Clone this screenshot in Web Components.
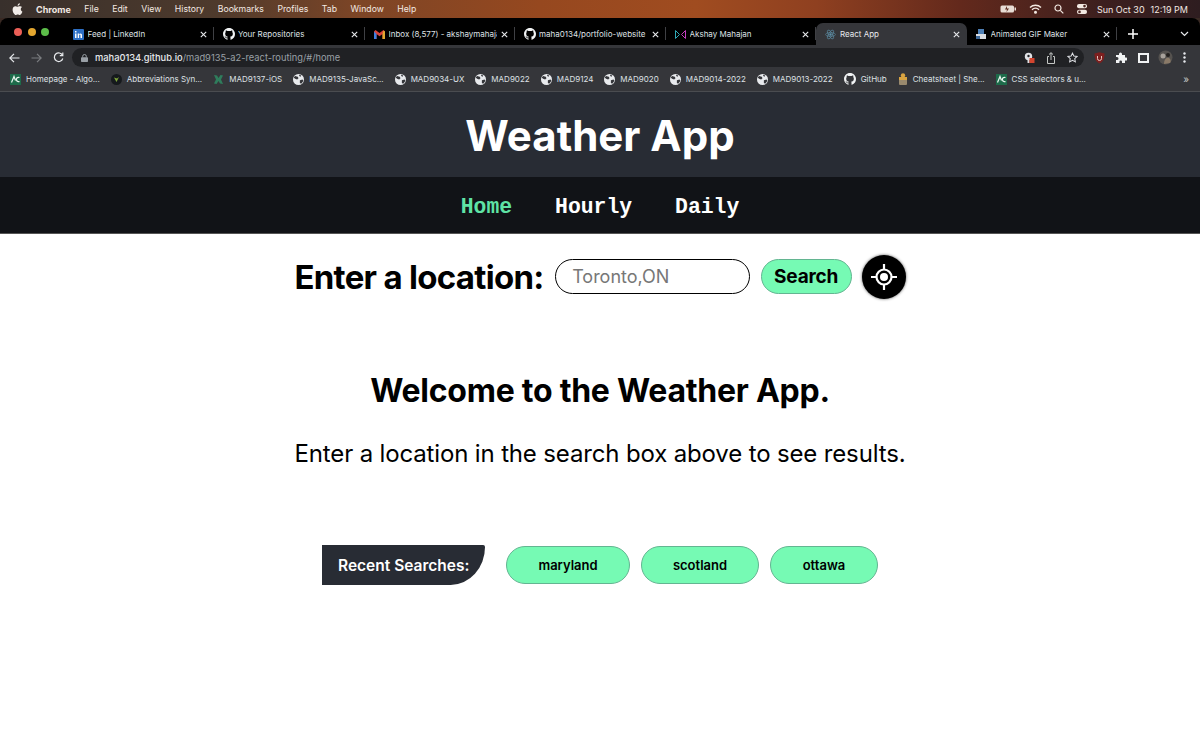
<!DOCTYPE html>
<html>
<head>
<meta charset="utf-8">
<title>React App</title>
<style>
  html,body{margin:0;padding:0;background:#fff;}
  body{width:1200px;height:750px;overflow:hidden;font-family:"Inter","Liberation Sans",sans-serif;}
</style>
</head>
<body>
<mac-menubar></mac-menubar>
<browser-chrome></browser-chrome>
<weather-app></weather-app>

<script>
const globe = '<svg width="11" height="11" viewBox="0 0 16 16"><circle cx="8" cy="8" r="8" fill="#e8eaed"/><path d="M3 3l4 1 1 2-2 2-3-1-2-2zM10 9l4-1 1 2-3 4-2-1z M9 1l3 1-1 2-2-1z" fill="#35363a"/></svg>';
const gh = '<svg width="12" height="12" viewBox="0 0 16 16"><path fill="#f1f3f4" d="M8 0C3.58 0 0 3.58 0 8c0 3.54 2.29 6.53 5.47 7.59.4.07.55-.17.55-.38 0-.19-.01-.82-.01-1.49-2.01.37-2.53-.49-2.69-.94-.09-.23-.48-.94-.82-1.13-.28-.15-.68-.52-.01-.53.63-.01 1.08.58 1.23.82.72 1.21 1.87.87 2.33.66.07-.52.28-.87.51-1.07-1.78-.2-3.64-.89-3.64-3.95 0-.87.31-1.59.82-2.15-.08-.2-.36-1.02.08-2.12 0 0 .67-.21 2.2.82.64-.18 1.32-.27 2-.27s1.36.09 2 .27c1.53-1.04 2.2-.82 2.2-.82.44 1.1.16 1.92.08 2.12.51.56.82 1.27.82 2.15 0 3.07-1.87 3.75-3.65 3.95.29.25.54.73.54 1.48 0 1.07-.01 1.93-.01 2.2 0 .21.15.46.55.38A8.01 8.01 0 0016 8c0-4.42-3.58-8-8-8z"/></svg>';
const ac = '<svg width="11" height="11" viewBox="0 0 11 11"><rect width="11" height="11" fill="#1d6b4a"/><path d="M1.500 8.500L4 2.500l1.500 4M9.500 3.500C7 3 6 4.500 6.500 6s2 2 3 1.500" fill="none" stroke="#e8f5ee" stroke-width="1.200"/></svg>';
const mad137 = '<svg width="11" height="11" viewBox="0 0 11 11"><path d="M1 1l3 .5 1.500 2.500L7.500 1 10 1.500 8 5.500 10 10l-3-.5L5.500 7 3.500 10 1 9.500 3 5.500z" fill="#2f7d5c"/></svg>';
const abbr = '<svg width="11" height="11" viewBox="0 0 11 11"><circle cx="5.500" cy="5.500" r="5.500" fill="#15191c"/><path d="M3 3.500l2.500 4.500 2.500-5-2 1.500z" fill="#7fa53a"/></svg>';
const sheet = '<svg width="10" height="12" viewBox="0 0 10 12"><rect x="1" y="4" width="8" height="8" rx="1" fill="#9a8a6e"/><rect x="1" y="4" width="8" height="3" fill="#d9a441"/><circle cx="5" cy="2.500" r="2.200" fill="#d9a441"/></svg>';
const linkedin = '<svg width="11" height="11" viewBox="0 0 11 11"><rect width="11" height="11" rx="1" fill="#2d6fc4"/><path d="M2 4.500h1.500V9H2zM2 2h1.500v1.500H2zM4.700 4.500H6v.7c.4-.6.9-.8 1.500-.8C8.600 4.400 9 5.100 9 6.300V9H7.500V6.600c0-.6-.2-1-.7-1s-.7.400-.7 1V9H4.700z" fill="#fff"/></svg>';
const gmail = '<svg width="11" height="9" viewBox="0 0 11 9"><path d="M0 1.500V9h2.500V4L5.500 6.300 8.500 4v5H11V1.500L9.500 0 5.500 3 1.500 0z" fill="#d8433a"/><path d="M8.500 4V9H11V1.500L9.500 .5z" fill="#e0a92e"/><path d="M0 1.500V9h2.500V4z" fill="#3f7fe0"/></svg>';
const akshay = '<svg width="11" height="11" viewBox="0 0 11 11"><path d="M.5 1.500v8l4-4z" fill="none" stroke="#2fa9b8" stroke-width="1"/><path d="M10.500 1.500v8l-4-4z" fill="none" stroke="#c33fc0" stroke-width="1"/></svg>';
const react = '<svg width="11" height="11" viewBox="-12 -12 24 24" fill="none" stroke="#5d8fa8" stroke-width="1.300"><ellipse rx="11" ry="4.200"/><ellipse rx="11" ry="4.200" transform="rotate(60)"/><ellipse rx="11" ry="4.200" transform="rotate(120)"/><circle r="2" fill="#5d8fa8"/></svg>';
const gifmaker = '<svg width="12" height="12" viewBox="0 0 12 12"><rect x="1" y="6" width="10" height="5" fill="#d9dde2"/><rect x="3" y="1" width="6" height="5" fill="#4d7fb5"/><rect x="1" y="8" width="4" height="3" fill="#3d6796"/></svg>';

class MacMenubar extends HTMLElement {
  constructor() {
    super();
    const root = this.attachShadow({ mode: 'open' });
    root.innerHTML = `
    <style>
      :host{display:flex;align-items:center;height:18px;padding:0 12px 0 12px;color:#f3e9e2;font:400 8.700px "Inter","Liberation Sans",sans-serif;
        background:linear-gradient(90deg,#38302c 0,#4e3a2c 18%,#7d4526 30%,#96481f 45%,#a04c20 58%,#8f4020 68%,#63291c 80%,#3c1f1e 92%,#2e1d20 100%);}
      .apple{width:11px;height:12px;margin-right:13px;}
      .items{display:flex;gap:13.500px;align-items:center;}
      b{font-weight:700;font-size:9px;}
      .right{margin-left:auto;display:flex;align-items:center;font-size:9px;}
    </style>
    <svg class="apple" viewBox="0 0 814 1000"><path fill="#f1ece8" d="M788 341c-6 4-108 62-108 190 0 148 130 201 134 202-1 3-21 72-69 142-43 61-88 123-156 123s-86-40-165-40c-77 0-104 41-166 41s-106-57-156-127C44 790 0 671 0 558 0 376 118 280 235 280c62 0 114 41 153 41 37 0 95-43 166-43 27 0 124 2 234 63zM555 171c29-35 50-83 50-131 0-7-1-13-2-19-47 2-104 32-138 71-27 30-52 79-52 128 0 7 1 15 2 17 3 1 8 1 12 1 43 0 97-29 128-67z"/></svg>
    <div class="items"><b>Chrome</b><span>File</span><span>Edit</span><span>View</span><span>History</span><span>Bookmarks</span><span>Profiles</span><span>Tab</span><span>Window</span><span>Help</span></div>
    <div class="right">
      <svg width="16" height="8" viewBox="0 0 16 8" style="margin-right:13px"><rect x=".5" y=".5" width="13.500" height="7" rx="1.500" fill="#e8dcd4"/><rect x="14.500" y="2.500" width="1.500" height="3" fill="#e8dcd4"/><path d="M7 1L5 4.500h2L6.500 7 9 3.500H7z" fill="#5a2a1e"/></svg>
      <svg width="13" height="10" viewBox="0 0 13 10" fill="none" stroke="#f3e9e2" stroke-width="1.400" style="margin-right:12px"><path d="M1 3.500a8 8 0 0 1 11 0M3 5.700a5 5 0 0 1 7 0"/><circle cx="6.500" cy="8.300" r=".8" fill="#f3e9e2"/></svg>
      <svg width="10" height="10" viewBox="0 0 10 10" fill="none" stroke="#f3e9e2" stroke-width="1.200" style="margin-right:12px"><circle cx="4" cy="4" r="3"/><path d="M6.300 6.300L9.300 9.300"/></svg>
      <svg width="12" height="10" viewBox="0 0 12 10" style="margin-right:9px"><rect x="1" width="10" height="4.300" rx="2" fill="#f3e9e2"/><rect x="1" y="5.700" width="10" height="4.300" rx="2" fill="#f3e9e2"/><circle cx="8.500" cy="2.100" r="1.300" fill="#4a2420"/><circle cx="3.500" cy="7.900" r="1.300" fill="#4a2420"/></svg>
      <span style="margin-right:6px">Sun Oct 30</span><span>12:19 PM</span>
    </div>`;
  }
}
customElements.define('mac-menubar', MacMenubar);

class BrowserTab extends HTMLElement {
  constructor() {
    super();
    const root = this.attachShadow({ mode: 'open' });
    root.innerHTML = `
    <style>
      :host{display:flex;align-items:center;box-sizing:border-box;width:150.500px;height:22px;padding:0 7px 0 8px;color:#dfe1e5;font:400 8px "Inter","Liberation Sans",sans-serif;position:relative;flex:none;}
      :host([active]){background:#35363a;border-radius:7px 7px 0 0;color:#e8eaed;}
      :host(:not([active]))::after{content:"";position:absolute;right:0;top:4px;height:13px;width:1px;background:#3f4044;}
      .ic{width:13px;height:14px;display:flex;align-items:center;justify-content:center;margin-right:3px;flex:none;}
      .t{flex:1;white-space:nowrap;overflow:hidden;}
      svg.x{flex:none;margin-left:4px;}
    </style>
    <div class="ic"><slot name="icon"></slot></div>
    <div class="t"><slot></slot></div>
    <svg class="x" width="7" height="7" viewBox="0 0 7 7" stroke="#e8eaed" stroke-width="1.100"><path d="M.8.800l5.400 5.400M6.200.800L.8 6.200"/></svg>`;
  }
}
customElements.define('browser-tab', BrowserTab);

class BookmarkItem extends HTMLElement {
  constructor() {
    super();
    const root = this.attachShadow({ mode: 'open' });
    root.innerHTML = `
    <style>
      :host{display:flex;align-items:center;gap:5px;color:#dfe1e5;font:400 8px "Inter","Liberation Sans",sans-serif;white-space:nowrap;flex:none;}
      .ic{display:flex;align-items:center;}
    </style>
    <span class="ic"><slot name="icon"></slot></span><slot></slot>`;
  }
}
customElements.define('bookmark-item', BookmarkItem);

class BrowserChrome extends HTMLElement {
  constructor() {
    super();
    const root = this.attachShadow({ mode: 'open' });
    const tabs = [
      [linkedin,'Feed | LinkedIn'],[gh,'Your Repositories'],[gmail,'Inbox (8,577) - akshaymahajan'],
      [gh,'maha0134/portfolio-website'],[akshay,'Akshay Mahajan'],[react,'React App',1],[gifmaker,'Animated GIF Maker']
    ];
    const marks = [
      [ac,'Homepage - Algo...'],[abbr,'Abbreviations Syn...'],[mad137,'MAD9137-iOS'],[globe,'MAD9135-JavaSc...'],
      [globe,'MAD9034-UX'],[globe,'MAD9022'],[globe,'MAD9124'],[globe,'MAD9020'],[globe,'MAD9014-2022'],
      [globe,'MAD9013-2022'],[gh,'GitHub'],[sheet,'Cheatsheet | She...'],[ac,'CSS selectors & u...']
    ];
    root.innerHTML = `
    <style>
      :host{display:block;background:#3a2a24;}
      .strip{display:flex;align-items:flex-end;height:27px;background:#000;border-radius:8px 8px 0 0;padding-left:14px;box-sizing:border-box;}
      .lights{display:flex;gap:5.500px;width:49.500px;flex:none;align-self:center;margin-top:1px;}
      .lights i{width:8px;height:8px;border-radius:50%;display:block;}
      .newtab{margin-left:11px;height:22px;display:flex;align-items:center;}
      .chev{margin-left:auto;margin-right:11px;height:22px;display:flex;align-items:center;}
      .bar{display:flex;align-items:flex-end;height:22px;background:#35363a;padding:0 0 0 9px;}
      .nav{display:flex;gap:11px;align-items:center;height:19px;width:63px;flex:none;}
      .url{display:flex;align-items:center;width:1003px;height:19px;border-radius:10px 10px 10px 10px;background:#202124;font:500 9.300px "Inter","Liberation Sans",sans-serif;color:#e8eaed;padding-left:9px;flex:none;}
      .url em{font-style:normal;color:#9aa0a6;font-weight:400;}
      .url svg.lock{margin-right:7px;}
      .urlr{margin-left:auto;margin-right:6px;display:flex;gap:11px;align-items:center;}
      .ext{display:flex;align-items:center;gap:11px;margin-left:10px;height:19px;}
      .marks{display:flex;align-items:center;gap:11px;height:24px;background:#35363a;border-bottom:1px solid #4a4c50;padding-left:10px;position:relative;}
      .more{position:absolute;right:11px;top:6px;color:#c4c7c5;font:400 10px "Inter",sans-serif;}
    </style>
    <div class="strip">
      <div class="lights"><i style="background:#ec5f57"></i><i style="background:#e3a62f"></i><i style="background:#5cbd49"></i></div>
      ${tabs.map(t => `<browser-tab ${t[2]?'active':''}><span slot="icon" style="display:flex">${t[0]}</span>${t[1]}</browser-tab>`).join('')}
      <div class="newtab"><svg width="10" height="10" viewBox="0 0 10 10" stroke="#fff" stroke-width="1.500"><path d="M5 0v10M0 5h10"/></svg></div>
      <div class="chev"><svg width="9" height="6" viewBox="0 0 9 6" fill="none" stroke="#e8eaed" stroke-width="1.200"><path d="M1 1l3.500 3.500L8 1"/></svg></div>
    </div>
    <div class="bar">
      <div class="nav">
        <svg width="11" height="10" viewBox="0 0 11 10" fill="none" stroke="#e8eaed" stroke-width="1.200"><path d="M10.500 5H1M5 .8L.8 5 5 9.200"/></svg>
        <svg width="11" height="10" viewBox="0 0 11 10" fill="none" stroke="#7b7d80" stroke-width="1.200"><path d="M.5 5H10M6 .8L10.200 5 6 9.200"/></svg>
        <svg width="11" height="11" viewBox="0 0 11 11" fill="none" stroke="#e8eaed" stroke-width="1.200"><path d="M9.500 3.200A4.300 4.300 0 1 0 9.800 6.500"/><path d="M9.800 .6v3H6.800" /></svg>
      </div>
      <div class="url">
        <svg class="lock" width="7" height="8" viewBox="0 0 7 8"><rect y="3.300" width="7" height="4.700" rx=".8" fill="#9aa0a6"/><path d="M1.700 3.500V2.300a1.800 1.800 0 0 1 3.600 0v1.200" fill="none" stroke="#9aa0a6"/></svg>
        maha0134.github.io<em>/mad9135-a2-react-routing/#/home</em>
        <div class="urlr">
          <svg width="11" height="12" viewBox="0 0 11 12"><circle cx="4.500" cy="4.500" r="3.700" fill="#dfe1e5"/><circle cx="4.500" cy="4" r="1.200" fill="#202124"/><path d="M3.500 8v3h2V8z" fill="#dfe1e5"/><rect x="5.500" y="6" width="5" height="5" fill="#d2452f"/></svg>
          <svg width="10" height="12" viewBox="0 0 10 12" fill="none" stroke="#c4c7c5" stroke-width="1"><path d="M3 4.500H1.500v7h7v-7H7M5 8V.8M3 2.500L5 .7l2 1.800"/></svg>
          <svg width="11" height="11" viewBox="0 0 24 24" fill="none" stroke="#dfe1e5" stroke-width="2.200"><path d="M12 2.500l3 6.400 7 .9-5.100 4.800 1.300 6.900-6.200-3.400-6.200 3.400 1.300-6.900L2 9.800l7-.9z"/></svg>
        </div>
      </div>
      <div class="ext">
        <svg width="11" height="12" viewBox="0 0 11 12"><path d="M.5 1.500l5-1.200 5 1.200c0 5-1 8-5 10-4-2-5-5-5-10z" fill="#7d1f1f"/><path d="M3.500 4v2.500a2 2 0 0 0 4 0V4" fill="none" stroke="#e6c7c0" stroke-width="1"/></svg>
        <svg width="11" height="11" viewBox="0 0 11 11"><path d="M0 3h3V2a1.500 1.500 0 0 1 3 0v1h3v2.500h1a1.500 1.500 0 0 1 0 3H9V11H6V9.800a1.300 1.300 0 0 0-2.600 0V11H0V8h1a1.500 1.500 0 0 0 0-3H0z" fill="#f1f3f4"/></svg>
        <svg width="11" height="10" viewBox="0 0 11 10"><rect x="1" y="1" width="9" height="8" fill="none" stroke="#f1f3f4" stroke-width="2"/></svg>
        <svg width="15" height="15" viewBox="0 0 15 15" style="margin-left:-2px"><circle cx="7.500" cy="7.500" r="7" fill="#55524f"/><circle cx="5" cy="6" r="2.500" fill="#a8a29b"/><path d="M6 14c0-4 2-7 5-6 2 1 2 4 1 5z" fill="#8a7a68"/><circle cx="10" cy="5" r="2" fill="#23201e"/></svg>
        <svg width="3" height="11" viewBox="0 0 3 11" fill="#e8eaed" style="margin-left:-1px"><circle cx="1.500" cy="1.500" r="1.200"/><circle cx="1.500" cy="5.500" r="1.200"/><circle cx="1.500" cy="9.500" r="1.200"/></svg>
      </div>
    </div>
    <div class="marks">
      ${marks.map(m => `<bookmark-item><span slot="icon" style="display:flex">${m[0]}</span>${m[1]}</bookmark-item>`).join('')}
      <span class="more">»</span>
    </div>`;
  }
}
customElements.define('browser-chrome', BrowserChrome);

class AppHeader extends HTMLElement {
  constructor() {
    super();
    const root = this.attachShadow({ mode: 'open' });
    root.innerHTML = `
    <style>
      :host{display:block;}
      h1{margin:0;height:85px;background:#282c34;color:#fff;text-align:center;font:700 42px/87px "Inter","Liberation Sans",sans-serif;}
      nav{display:flex;justify-content:center;gap:43px;align-items:center;background:#111317;border-bottom:1px solid #555;height:52px;padding-top:4px;font:700 21.400px "Liberation Mono",monospace;color:#fff;}
      .on{color:#5fe3a5;}
    </style>
    <h1>Weather App</h1>
    <nav><span class="on">Home</span><span>Hourly</span><span>Daily</span></nav>`;
  }
}
customElements.define('app-header', AppHeader);

class SearchBar extends HTMLElement {
  constructor() {
    super();
    const root = this.attachShadow({ mode: 'open' });
    root.innerHTML = `
    <style>
      :host{display:flex;justify-content:center;align-items:center;height:86px;padding-bottom:1px;box-sizing:border-box;font-family:"Inter","Liberation Sans",sans-serif;color:#000;}
      label{font:700 33px "Inter",sans-serif;letter-spacing:-.7px;margin-right:11px;white-space:nowrap;}
      input{width:195px;height:35px;box-sizing:border-box;border:1.500px solid #000;border-radius:18px;padding:0 16.500px;font:400 18px "Inter","Liberation Sans",sans-serif;margin:0 11px 0 0;outline:none;background:#fff;}
      input::placeholder{color:#777;opacity:1;}
      button.s{width:91px;height:35px;border:1.500px solid #63b591;border-radius:18px;background:#76fab4;font:700 19px "Inter",sans-serif;letter-spacing:-.2px;color:#000;padding:0;margin:0 10px 0 0;}
      button.g{width:44px;height:44px;border-radius:50%;background:#000;border:0;padding:0;display:flex;align-items:center;justify-content:center;box-shadow:0 0 3px #555;}
    </style>
    <label>Enter a location:</label>
    <input placeholder="Toronto,ON">
    <button class="s">Search</button>
    <button class="g" aria-label="Use my location">
      <svg width="28" height="28" viewBox="0 0 28 28" fill="none" stroke="#fff" stroke-width="2.200"><circle cx="14" cy="14" r="7.500"/><circle cx="14" cy="14" r="4" fill="#fff" stroke="none"/><path d="M14 1v5.500M14 21.500V27M1 14h5.500M21.500 14H27"/></svg>
    </button>`;
  }
}
customElements.define('search-bar', SearchBar);

class WelcomeBlock extends HTMLElement {
  constructor() {
    super();
    const root = this.attachShadow({ mode: 'open' });
    root.innerHTML = `
    <style>
      :host{display:block;text-align:center;color:#000;font-family:"Inter","Liberation Sans",sans-serif;padding-top:51px;}
      h2{margin:0;font:700 32px/40px "Inter",sans-serif;letter-spacing:-.25px;}
      p{margin:28px 0 0;font:400 24px/30px "Inter",sans-serif;letter-spacing:-.15px;}
    </style>
    <h2>Welcome to the Weather App.</h2>
    <p>Enter a location in the search box above to see results.</p>`;
  }
}
customElements.define('welcome-block', WelcomeBlock);

class RecentSearches extends HTMLElement {
  constructor() {
    super();
    const root = this.attachShadow({ mode: 'open' });
    root.innerHTML = `
    <style>
      :host{display:flex;justify-content:center;align-items:center;margin-top:76px;font-family:"Inter","Liberation Sans",sans-serif;}
      .lab{width:163px;height:40px;box-sizing:border-box;background:#282c34;color:#fff;font:600 15.500px/41px "Inter",sans-serif;padding-left:16px;border-radius:0 2px 36px 0 / 0 2px 40px 0;white-space:nowrap;margin-right:21px;}
      .chips{display:flex;gap:11px;}
    </style>
    <div class="lab">Recent Searches:</div>
    <div class="chips"><slot></slot></div>`;
  }
}
customElements.define('recent-searches', RecentSearches);

class SearchChip extends HTMLElement {
  constructor() {
    super();
    const root = this.attachShadow({ mode: 'open' });
    root.innerHTML = `
    <style>
      :host{display:flex;align-items:center;justify-content:center;box-sizing:border-box;height:38px;border:1.500px solid #63b591;border-radius:19px;background:#76fab4;color:#000;font:600 13px "Inter",sans-serif;}
    </style>
    <slot></slot>`;
  }
}
customElements.define('search-chip', SearchChip);

class WeatherApp extends HTMLElement {
  constructor() {
    super();
    const root = this.attachShadow({ mode: 'open' });
    root.innerHTML = `
    <style>:host{display:block;background:#fff;}</style>
    <app-header></app-header>
    <search-bar></search-bar>
    <welcome-block></welcome-block>
    <recent-searches>
      <search-chip style="width:124px">maryland</search-chip>
      <search-chip style="width:118px">scotland</search-chip>
      <search-chip style="width:108px">ottawa</search-chip>
    </recent-searches>`;
  }
}
customElements.define('weather-app', WeatherApp);
</script>
</body>
</html>
